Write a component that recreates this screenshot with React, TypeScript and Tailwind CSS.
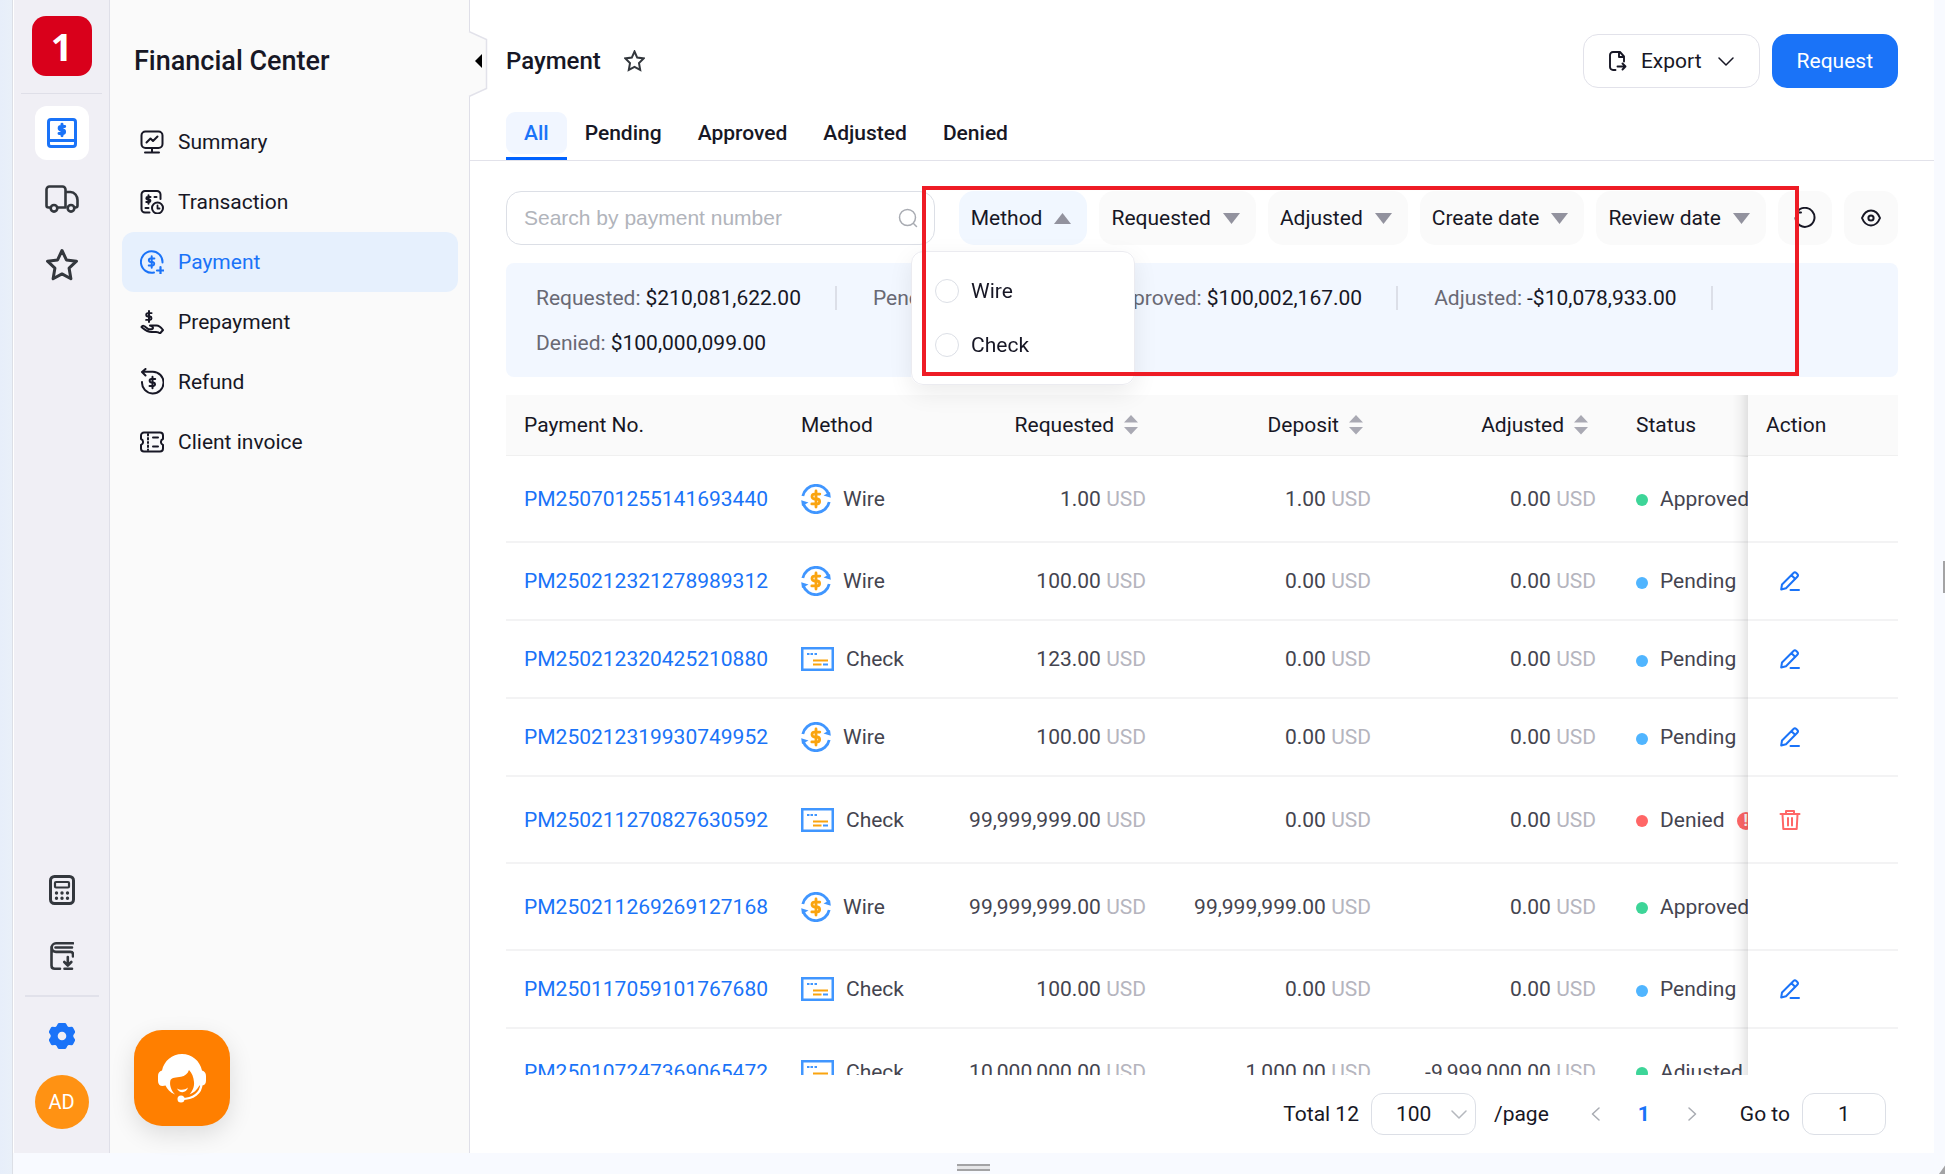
import React from "react";

const DOLLAR = "M17 5.5H10a3.2 3.2 0 0 0 0 6.5h4a3.3 3.3 0 0 1 0 6.5H6.5M12 1.5v21";

function Icon({ w = 24, h = 24, sw = 2, className = "", children }: {
  w?: number; h?: number; sw?: number; className?: string; children: React.ReactNode;
}) {
  return (
    <svg width={w} height={h} viewBox={`0 0 ${w} ${h}`} fill="none" stroke="currentColor" strokeWidth={sw}
      strokeLinecap="round" strokeLinejoin="round" className={`shrink-0 ${className}`} aria-hidden="true">
      {children}
    </svg>
  );
}

function Dollar({ cx, cy, s, sw = 4 }: { cx: number; cy: number; s: number; sw?: number }) {
  return <path d={DOLLAR} transform={`translate(${cx - 12 * s} ${cy - 12 * s}) scale(${s})`} strokeWidth={sw} />;
}

const SummaryIcon = () => (
  <Icon>
    <rect x="1.5" y="1.5" width="21" height="16.5" rx="4" />
    <path d="M6.500 12.500 10.500 8.500 13 11 17.500 6.500M12 18v4M5 22.500h14" />
  </Icon>
);

const TransactionIcon = () => (
  <Icon>
    <path d="M9.500 22.500H5A3.500 3.500 0 0 1 1.500 19V4.500A3.500 3.500 0 0 1 5 1h12a3.500 3.500 0 0 1 3.500 3.500V9" />
    <Dollar cx={8.500} cy={9.500} s={0.4} sw={5} />
    <path d="M14.500 7h2M5.500 18h3" />
    <circle cx="17.500" cy="18" r="5.500" />
    <path d="M17.500 15.500V18.500h2" strokeWidth="1.800" />
  </Icon>
);

const PaymentIcon = () => (
  <Icon>
    <path d="M22.500 12.500A10.800 10.800 0 1 0 14 22.600" />
    <Dollar cx={11.700} cy={12} s={0.54} sw={3.600} />
    <path d="M20.500 17v7M17 20.500h7" strokeWidth="2.200" />
  </Icon>
);

const PrepaymentIcon = () => (
  <Icon>
    <Dollar cx={9} cy={6.500} s={0.52} sw={3.800} />
    <path d="M10 15.500h6.500c2.500 0 4 1.200 6.500 4.500l-3 3.500c-1.200-1.500-2-1.500-4-1.500h-4.500c-4.500 0-7-2.500-10-5 1-1.800 3-1.200 4 0l3 2.200h3.500c1.500-.8 1.200-2.500-.5-3z" />
  </Icon>
);

const RefundIcon = () => (
  <Icon h={28}>
    <path d="M2 14a10.800 10.800 0 1 0 10.800-10.200H2.500M5.500 1 2 4l3.500 3.500" />
    <Dollar cx={12.500} cy={14.500} s={0.54} sw={3.700} />
  </Icon>
);

const InvoiceIcon = () => (
  <Icon>
    <path d="M4 2.500h16a3 3 0 0 1 3 3V9a3.200 3.200 0 0 0 0 6v3.500a3 3 0 0 1-3 3H4a3 3 0 0 1-3-3V15a3.200 3.200 0 0 0 0-6V5.500a3 3 0 0 1 3-3z" />
    <path d="M13 7.500h5M13 16.500h5" />
    <path d="M8 4v1.500M8 8v1.500M8 12v1M8 15.500V17M8 19.500V20" />
  </Icon>
);

const NAV = [
  { label: "Summary", icon: <SummaryIcon /> },
  { label: "Transaction", icon: <TransactionIcon /> },
  { label: "Payment", icon: <PaymentIcon />, active: true },
  { label: "Prepayment", icon: <PrepaymentIcon /> },
  { label: "Refund", icon: <RefundIcon /> },
  { label: "Client invoice", icon: <InvoiceIcon /> },
];

const TABS = ["Pending", "Approved", "Adjusted", "Denied"];
const FILTERS = ["Requested", "Adjusted", "Create date", "Review date"];

const TOTALS = [
  ["Requested:", "$210,081,622.00"],
  ["Pending:", "$423.00"],
  ["Approved:", "$100,002,167.00"],
  ["Adjusted:", "-$10,078,933.00"],
  ["Denied:", "$100,000,099.00"],
];

type Row = { no: string; method: "Wire" | "Check"; req: string; dep: string; adj: string; status: string; tall?: boolean };

const ROWS: Row[] = [
  { no: "PM250701255141693440", method: "Wire", req: "1.00", dep: "1.00", adj: "0.00", status: "Approved", tall: true },
  { no: "PM250212321278989312", method: "Wire", req: "100.00", dep: "0.00", adj: "0.00", status: "Pending" },
  { no: "PM250212320425210880", method: "Check", req: "123.00", dep: "0.00", adj: "0.00", status: "Pending" },
  { no: "PM250212319930749952", method: "Wire", req: "100.00", dep: "0.00", adj: "0.00", status: "Pending" },
  { no: "PM250211270827630592", method: "Check", req: "99,999,999.00", dep: "0.00", adj: "0.00", status: "Denied", tall: true },
  { no: "PM250211269269127168", method: "Wire", req: "99,999,999.00", dep: "99,999,999.00", adj: "0.00", status: "Approved", tall: true },
  { no: "PM250117059101767680", method: "Check", req: "100.00", dep: "0.00", adj: "0.00", status: "Pending" },
  { no: "PM250107247369065472", method: "Check", req: "10,000,000.00", dep: "1,000.00", adj: "-9,999,000.00", status: "Adjusted", tall: true },
];

const DOT: Record<string, string> = {
  Approved: "bg-[#3dd598]",
  Adjusted: "bg-[#3dd598]",
  Pending: "bg-[#50b5ff]",
  Denied: "bg-[#ff6666]",
};

const WireIcon = () => (
  <svg width="30" height="30" viewBox="0 0 30 30" fill="none" className="shrink-0" aria-hidden="true">
    <path d="M1.800 12A13.500 13.500 0 0 1 27.800 10.500M28.200 18A13.500 13.500 0 0 1 2.200 19.500" stroke="#4096ff" strokeWidth="2.800" />
    <path d="M29.800 13.800 22.500 11.500 29 8zM.2 16.200l7.300 2.300L1 22z" fill="#4096ff" />
    <g stroke="#faa40f" strokeLinecap="round" strokeLinejoin="round"><Dollar cx={15} cy={15} s={0.76} sw={3.700} /></g>
  </svg>
);

const CheckIcon = () => (
  <svg width="33" height="24" viewBox="0 0 33 24" fill="none" className="shrink-0" aria-hidden="true">
    <rect x="1.250" y="1.250" width="30.500" height="21.500" stroke="#4096ff" strokeWidth="2.500" />
    <path d="M6 7h2.500M9.500 7H12M13.500 7H16M22 17.500h5" stroke="#4096ff" strokeWidth="2" />
    <path d="M12 13.500h15M12 17.500h8.500" stroke="#faa40f" strokeWidth="2.200" />
  </svg>
);

const Caret = ({ up = false }: { up?: boolean }) => (
  <svg width="17" height="11" viewBox="0 0 17 11" fill="#92929e" className="shrink-0" aria-hidden="true">
    <path d={up ? "M0 11 8.500 0 17 11z" : "M0 0h17L8.500 11z"} />
  </svg>
);

const SortIcon = () => (
  <svg width="14" height="20" viewBox="0 0 14 20" fill="#a9a9b3" className="shrink-0" aria-hidden="true">
    <path d="M0 7.500 7 0l7 7.500zM0 12h14l-7 7.500z" />
  </svg>
);

function Money({ value }: { value: string }) {
  return (
    <td className="border-b-2 border-[#f3f3f4] px-[18px] text-right whitespace-nowrap">
      {value} <span className="text-[#b5b5be]">USD</span>
    </td>
  );
}

const STICKY =
  "sticky right-0 px-[18px] before:pointer-events-none before:absolute before:top-0 before:right-full before:-bottom-[2px] before:w-4 before:bg-linear-to-l before:from-black/10 before:via-black/3 before:to-transparent before:content-['']";

function PaymentTable() {
  return (
    <table className="w-full min-w-[1440px] table-fixed border-separate border-spacing-0">
      <colgroup>
        <col className="w-[277px]" />
        <col className="w-[155px]" />
        <col className="w-[226px]" />
        <col className="w-[225px]" />
        <col className="w-[225px]" />
        <col />
        <col className="w-[150px]" />
      </colgroup>
      <thead>
        <tr className="h-[61px] text-left text-[#171725]">
          <th className="border-b border-[#f0f0f0] bg-[#fafafa] px-[18px] font-normal">Payment No.</th>
          <th className="border-b border-[#f0f0f0] bg-[#fafafa] px-[18px] font-normal">Method</th>
          {["Requested", "Deposit", "Adjusted"].map((h) => (
            <th key={h} className="border-b border-[#f0f0f0] bg-[#fafafa] pr-[26px] font-normal">
              <button className="ml-auto flex items-center gap-[10px]">{h}<SortIcon /></button>
            </th>
          ))}
          <th className="border-b border-[#f0f0f0] bg-[#fafafa] pl-[22px] font-normal">Status</th>
          <th className={`${STICKY} border-b border-[#f0f0f0] bg-[#fafafa] font-normal`}>Action</th>
        </tr>
      </thead>
      <tbody className="text-[#44444f]">
        {ROWS.map((r) => (
          <tr key={r.no} className={r.tall ? "h-[87px]" : "h-[78px]"}>
            <td className="border-b-2 border-[#f3f3f4] px-[18px]">
              <a href="#" className="text-[#1a73f8]">{r.no}</a>
            </td>
            <td className="border-b-2 border-[#f3f3f4] px-[18px]">
              <div className="flex items-center gap-3">
                {r.method === "Wire" ? <WireIcon /> : <CheckIcon />}
                {r.method}
              </div>
            </td>
            <Money value={r.req} />
            <Money value={r.dep} />
            <Money value={r.adj} />
            <td className="border-b-2 border-[#f3f3f4] pl-[22px]">
              <div className="flex items-center gap-3">
                <span className={`mt-[3px] size-3 rounded-full ${DOT[r.status]}`} />
                {r.status}
                {r.status === "Denied" && (
                  <span className="mt-[3px] flex size-[18px] items-center justify-center rounded-full bg-[#ff6666] text-base leading-none font-bold text-white">!</span>
                )}
              </div>
            </td>
            <td className={`${STICKY} border-b-2 border-[#f3f3f4] bg-white`}>
              {r.status === "Pending" && (
                <button aria-label="Edit" className="ml-[13px] block text-[#1a73f8]">
                  <Icon w={22} h={22}>
                    <path d="M3 14.500 14.500 3a2 2 0 0 1 2.800 0l1 1a2 2 0 0 1 0 2.800L7 18.300 2.200 19.500zM12.500 5.200l3.800 3.800M11.500 20H20" />
                  </Icon>
                </button>
              )}
              {r.status === "Denied" && (
                <button aria-label="Delete" className="ml-[13px] block text-[#ff6666]">
                  <Icon w={22} h={22}>
                    <path d="M1.500 5h19M7 4.500V2h8v2.500M3.500 5.500l.8 14.500h13.400l.8-14.500M9 9v7.500M13 9v7.500" />
                  </Icon>
                </button>
              )}
            </td>
          </tr>
        ))}
      </tbody>
    </table>
  );
}

function Rail() {
  return (
    <nav aria-label="Apps" className="flex w-24 shrink-0 flex-col items-center border-r border-[#dfdfe8] bg-[#f0eff5] pt-4 pb-6 text-[#33373d]">
      <div className="flex size-15 items-center justify-center rounded-[14px] bg-[#d9001b] font-['Open_Sans'] text-[38px] leading-none font-bold text-white">1</div>
      <hr className="mt-[17px] w-[81px] border-[#dfdfe8]" />
      <button aria-label="Financial center" className="mt-3 flex size-[54px] items-center justify-center rounded-xl bg-white text-[#1a73f8]">
        <Icon w={30} h={30} sw={3}>
          <rect x="1.500" y="1.500" width="27" height="27" rx="2.500" />
          <path d="M2 22.500h26" />
          <Dollar cx={15} cy={12} s={0.54} sw={5.500} />
        </Icon>
      </button>
      <button aria-label="Shipping" className="mt-3 flex size-[54px] items-center justify-center">
        <Icon w={34} h={28} sw={2.600}>
          <path d="M5.500 22.500H3.500a2 2 0 0 1-2-2V4.500a3 3 0 0 1 3-3h13a3 3 0 0 1 3 3v18H12.500M20.500 7h5c4 0 7 4 7 8v5.500a2 2 0 0 1-2 2h-1" />
          <circle cx="9" cy="23.300" r="3.300" />
          <circle cx="26" cy="23.300" r="3.300" />
        </Icon>
      </button>
      <button aria-label="Favorites" className="mt-3 flex size-[54px] items-center justify-center">
        <Icon w={34} h={34} sw={3}>
          <path d="M17 2.500l4.400 9.400 10.100 1.300-7.400 7 1.800 10.500L17 25.900 8.100 30.700l1.800-10.500-7.400-7 10.100-1.300z" />
        </Icon>
      </button>
      <button aria-label="Calculator" className="mt-auto">
        <Icon w={26} h={30} sw={3}>
          <rect x="1.500" y="1.500" width="23" height="27" rx="4" />
          <rect x="6" y="7" width="14" height="5.500" rx="1" strokeWidth="2.200" />
          <path d="M7.500 18h.01M13 18h.01M18.500 18h.01M7.500 23.300h.01M13 23.300h.01M18.500 23.300h.01" strokeWidth="3.400" />
        </Icon>
      </button>
      <button aria-label="Downloads" className="mt-9">
        <Icon w={24} h={30} sw={2.600}>
          <path d="M23 2.300H6a4.300 4.300 0 0 0 0 8.600h14.500c1.500 0 2.500 1 2.500 2.500v2M1.500 6v18.500c0 2 1.300 3.300 3.300 3.300H10M5.500 6.500H22M14.500 27.800h7.500M17.800 16v8M14.300 21l3.500 3.500 3.500-3.500" />
        </Icon>
      </button>
      <hr className="mt-6 w-[74px] border-t-2 border-[#e1e1ea]" />
      <button aria-label="Settings" className="mt-[25px] text-[#1a73f8]">
        <svg width="26" height="28" viewBox="0 0 26 28" fill="currentColor" fillRule="evenodd" aria-hidden="true">
          <path d="M10 1h6q.8 0 1.200.8l1.200 2.300q.6 1 1.800.9l2.500-.2q.9 0 1.300.8l2 3.700q.4.800-.1 1.500l-1.300 2q-.7 1.200 0 2.400l1.300 2q.5.700.1 1.500l-2 3.700q-.4.800-1.300.8l-2.500-.2q-1.200-.1-1.800.9l-1.200 2.300q-.4.800-1.200.8h-6q-.8 0-1.200-.8l-1.200-2.300q-.6-1-1.800-.9l-2.500.2q-.9 0-1.300-.8l-2-3.700q-.4-.8.1-1.500l1.300-2q.7-1.200 0-2.400l-1.300-2q-.5-.7-.1-1.500l2-3.700q.4-.8 1.300-.8l2.500.2q1.200.1 1.800-.9l1.200-2.300Q9.200 1 10 1zM13 9.700a4.300 4.300 0 1 0 0 8.600 4.300 4.300 0 0 0 0-8.600z" />
        </svg>
      </button>
      <button className="mt-[25px] flex size-[54px] items-center justify-center rounded-full bg-[#ff9213] text-xl text-white">AD</button>
    </nav>
  );
}

function Sidebar() {
  return (
    <aside className="flex w-[360px] shrink-0 flex-col border-r border-[#dfdfe8] bg-[#fafafa] pr-[11px] pb-[27px] pl-3">
      <h2 className="px-3 pt-[43px] text-[27px] leading-9 font-medium text-[#171725]">Financial Center</h2>
      <ul className="mt-[33px]">
        {NAV.map((n) => (
          <li key={n.label}>
            <a href="#" aria-current={n.active ? "page" : undefined}
              className={n.active
                ? "flex h-15 items-center gap-[14px] rounded-xl bg-[#e6f0fd] px-[18px] text-[#1a73f8]"
                : "flex h-15 items-center gap-[14px] rounded-xl px-[18px] text-[#171725]"}>
              {n.icon}
              {n.label}
            </a>
          </li>
        ))}
      </ul>
      <button aria-label="Support" className="mt-auto ml-3 flex size-24 items-center justify-center rounded-[28px] bg-[#ff7f00] shadow-[0_8px_24px_rgba(0,0,0,0.12)]">
        <svg width="48" height="50" viewBox="0 0 48 50" aria-hidden="true">
          <path d="M24 1C34 1 42 8 44 17.500c2.600.8 4 2.500 4 5.500v5c0 3-2 4.500-4.500 4.500h-2C39 37 35.500 40 31.500 41.500 34.500 38 36.500 34 36 29c-.4-5-2-9-5-12-1.500 4-4 6-8 6.700-5 .8-9 .8-10.500 3.300-1.500 5 1 11 4.500 14.500C12 39.500 9 36 7.500 32.500 3 34 0 32 0 28v-5c0-3 1.400-4.700 4-5.500C6 8 14 1 24 1z" fill="#fff" />
          <path d="M19 35.500c3 1.800 8 1.800 11-1-1.500 6-9 6-11 1z" fill="#fff" />
          <path d="M43.500 31c-.5 9-8 15-20 15" fill="none" stroke="#fff" strokeWidth="2.400" />
          <circle cx="23" cy="46" r="3.500" fill="#fff" />
        </svg>
      </button>
    </aside>
  );
}

export default function App() {
  return (
    <div className="flex h-screen overflow-hidden bg-[#f8faff] font-[Roboto,sans-serif] text-[21px] leading-[30px] text-[#171725]">
      <div className="w-[13px] shrink-0 border-r border-[#dcdfe6] bg-linear-to-r from-[#e7eefa] to-[#e9f0f9]" />
      <div className="relative flex min-w-0 flex-1 flex-col">
        <div className="flex min-h-0 flex-1 bg-white pl-px">
          <Rail />
          <Sidebar />
          <main className="relative flex min-w-0 flex-1 flex-col">
            <button aria-label="Collapse sidebar" className="absolute top-[31px] -left-[2px]">
              <svg width="20" height="66" viewBox="0 0 20 66" aria-hidden="true">
                <path d="M1 .5 18.500 8.500v49L1 65.500z" fill="#fafafa" />
                <path d="M1 .5 18.500 8.500v49L1 65.500" fill="none" stroke="#e2e2ea" strokeWidth="1.500" />
                <path d="M7 30l7-7v14z" fill="#000" />
              </svg>
            </button>

            <header className="flex items-center px-9 pt-[34px]">
              <h1 className="text-2xl font-medium">Payment</h1>
              <button aria-label="Add to favorites" className="ml-[23px] text-[#33373d]">
                <Icon w={21} h={22} sw={2}>
                  <path d="M10.500 1.500l2.700 6.100 6.500.8-4.700 4.700 1.200 6.800-5.700-3-5.700 3L6 13.100 1.300 8.400l6.500-.8z" strokeLinejoin="miter" />
                </Icon>
              </button>
              <button className="mr-3 ml-auto flex h-[54px] items-center rounded-[15px] border border-[#e2e2ea] px-[25px]">
                <Icon w={18} h={20}>
                  <path d="M6.500 19H4a3 3 0 0 1-3-3V4a3 3 0 0 1 3-3h7l4 4.500v5M10 1.500V6h5M8.500 15.500h8M13.500 12.500l3 3-3 3" strokeWidth="1.900" />
                </Icon>
                <span className="ml-[14px]">Export</span>
                <Icon w={16} h={9} sw={1.500} className="ml-4"><path d="M1 1l7 7 7-7" /></Icon>
              </button>
              <button className="h-[54px] rounded-[15px] bg-[#1a73f8] px-[25px] text-white">Request</button>
            </header>

            <div role="tablist" className="mt-6 flex border-b border-[#e2e2ea] px-9 font-medium">
              <button role="tab" aria-selected="true" className="border-b-[3px] border-[#0062ff] pb-[3px] text-[#1a73f8]">
                <span className="flex h-[42px] items-center rounded-[9px] bg-[#f1f6ff] px-[18px]">All</span>
              </button>
              {TABS.map((t) => (
                <button key={t} role="tab" aria-selected="false" className="h-[42px] px-[18px]">{t}</button>
              ))}
            </div>

            <div className="mt-[30px] flex h-[54px] gap-3 px-9">
              <label className="mr-3 flex min-w-0 flex-1 items-center rounded-[15px] border border-[#dcdfe6] pr-4 pl-[17px]">
                <span className="sr-only">Search payments</span>
                <input placeholder="Search by payment number" className="min-w-0 flex-1 font-['Liberation_Sans'] outline-none placeholder:text-[#b1b4bb]" />
                <Icon w={20} h={20} sw={1.500} className="text-[#a8abb2]">
                  <circle cx="9.500" cy="9.500" r="8" /><path d="M15.500 15.500 18.500 18.500" />
                </Icon>
              </label>
              <div className="relative flex">
                <button aria-expanded="true" className="flex items-center gap-3 rounded-[15px] bg-[#f1f7ff] pr-4 pl-3">
                  Method<Caret up />
                </button>
                <fieldset className="absolute top-[60px] left-1/2 z-10 w-[224px] -translate-x-1/2 rounded-xl border border-[#ebebf0] bg-white py-3 shadow-[0_8px_24px_rgba(0,0,0,0.08)]">
                  <legend className="sr-only">Payment method</legend>
                  {["Wire", "Check"].map((m) => (
                    <label key={m} className="flex h-[54px] items-center gap-3 px-[23px]">
                      <input type="radio" name="method" className="size-6 appearance-none rounded-full border border-[#dcdfe6] bg-white checked:border-[7px] checked:border-[#1a73f8]" />
                      {m}
                    </label>
                  ))}
                </fieldset>
              </div>
              {FILTERS.map((f) => (
                <button key={f} className="flex items-center gap-3 rounded-[15px] bg-[#fafafa] pr-4 pl-3 whitespace-nowrap">
                  {f}<Caret />
                </button>
              ))}
              <button aria-label="Reset" className="flex w-[54px] items-center justify-center rounded-[15px] bg-[#fafafa]">
                <Icon w={22} h={22}>
                  <path d="M3 5.200A9.500 9.500 0 1 1 1.500 11M2.500 1v4.500H7" />
                </Icon>
              </button>
              <button aria-label="Visible columns" className="flex w-[54px] items-center justify-center rounded-[15px] bg-[#fafafa]">
                <Icon w={20} h={18}>
                  <path d="M1 9c2-5 5.500-7.500 9-7.500S17 4 19 9c-2 5-5.500 7.500-9 7.500S3 14 1 9z" />
                  <circle cx="10" cy="9" r="2.600" />
                </Icon>
              </button>
            </div>

            <dl className="mx-9 mt-[18px] flex flex-wrap gap-x-9 rounded-lg bg-[#f2f7ff] px-[30px] py-3">
              {TOTALS.map(([label, value], i) => (
                <div key={label} className="flex h-[45px] items-center">
                  <dt className="mr-[5px] text-[#696974]">{label}</dt>
                  <dd>{value}</dd>
                  {i < 4 && <span className="ml-[34px] h-6 w-[2px] bg-[#dcdfe8]" />}
                </div>
              ))}
            </dl>

            <div className="mx-9 mt-[18px] min-h-0 flex-1 overflow-hidden">
              <PaymentTable />
            </div>

            <footer className="flex items-center justify-end py-[18px] pr-12">
              <span>Total 12</span>
              <div className="relative ml-3">
                <select aria-label="Rows per page" defaultValue="100" className="h-[42px] w-[105px] appearance-none rounded-xl border border-[#dcdfe6] bg-white pl-6">
                  <option>50</option>
                  <option>100</option>
                </select>
                <Icon w={16} h={9} sw={1.500} className="pointer-events-none absolute top-[17px] right-[9px] text-[#b5b8be]"><path d="M1 1l7 7 7-7" /></Icon>
              </div>
              <span className="ml-[18px]">/page</span>
              <button aria-label="Previous page" className="ml-[42px] text-[#a8abb2]"><Icon w={9} h={14} sw={1.500}><path d="M8 1 1.500 7 8 13" /></Icon></button>
              <button aria-current="page" className="mx-[38px] font-bold text-[#1a73f8]">1</button>
              <button aria-label="Next page" className="text-[#a8abb2]"><Icon w={9} h={14} sw={1.500}><path d="M1 1l6.500 6L1 13" /></Icon></button>
              <label className="ml-[43px] flex items-center gap-3">
                Go to
                <input defaultValue="1" className="h-[42px] w-[84px] rounded-xl border border-[#dcdfe6] text-center outline-none" />
              </label>
            </footer>

            <div className="pointer-events-none absolute top-[186px] right-[135px] left-[452px] z-20 h-[190px] border-4 border-[#ee1c25]" />
          </main>
        </div>
        <div className="flex h-[21px] shrink-0 items-center justify-center pt-[7px]">
          <div className="h-[7px] w-[33px] border-y-2 border-[#a3a3a5] bg-[#e6e6e8]" />
        </div>
      </div>
      <div className="flex w-[11px] shrink-0 flex-col items-end justify-center">
        <div className="mt-auto mb-[10px] h-8 w-[2px] bg-[#a3a3a5]" />
        <svg width="6" height="10" viewBox="0 0 6 10" className="mt-auto" aria-hidden="true">
          <path d="M0 10 6 1.500V10z" fill="#a3a3a5" />
        </svg>
      </div>
    </div>
  );
}
